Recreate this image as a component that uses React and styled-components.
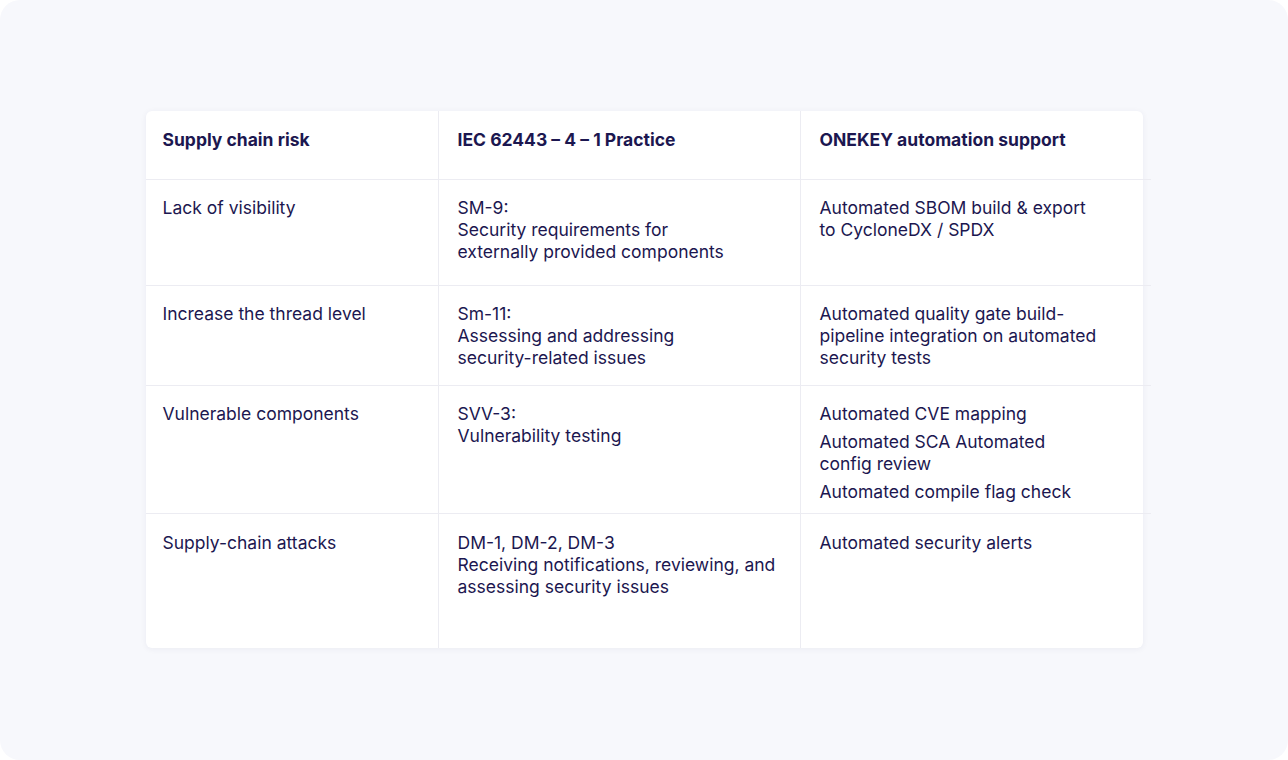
import styled, { createGlobalStyle } from 'styled-components';

const GlobalStyle = createGlobalStyle`
  html, body {
    margin: 0;
    padding: 0;
    background: #ffffff;
  }
  * {
    box-sizing: border-box;
  }
`

const Frame = styled.main`
  width: 1288px;
  height: 760px;
  border-radius: 20px;
  background: #f7f8fc;
  display: flex;
  align-items: flex-start;
  justify-content: center;
  padding-top: 111px;
  font-family: "Inter", "Liberation Sans", sans-serif;
  color: #1c1750;
`

const Card = styled.section`
  width: 997px;
  height: 537px;
  background: #ffffff;
  border-radius: 6px;
  box-shadow: 0 1px 6px rgba(30, 30, 90, 0.06);
  display: grid;
  grid-template-rows: 69px 106px 100px 128px 1fr;
`

const Row = styled.div`
  width: 1005px;
  display: grid;
  grid-template-columns: 293px 362px 1fr;
  border-bottom: ${props => (props.$last ? 'none' : '1px solid #ececf2')};
`

const Cell = styled.div`
  padding: ${props => props.$top || '17px'} 10px 0 ${props => (props.$first ? '17px' : '19px')};
  border-right: ${props => (props.$edge ? 'none' : '1px solid #ececf2')};
  font-size: 17.5px;
  line-height: 22px;
  font-weight: ${props => (props.$head ? 700 : 400)};
  white-space: nowrap;
  display: flex;
  flex-direction: column;
  gap: 6px;
`

const Item = styled.div``

const rows = [
  {
    risk: 'Lack of visibility',
    practice: ['SM-9:', 'Security requirements for', 'externally provided components'],
    support: [['Automated SBOM build & export', 'to CycloneDX / SPDX']],
  },
  {
    risk: 'Increase the thread level',
    practice: ['Sm-11:', 'Assessing and addressing', 'security-related issues'],
    support: [['Automated quality gate build-', 'pipeline integration on automated', 'security tests']],
  },
  {
    risk: 'Vulnerable components',
    practice: ['SVV-3:', 'Vulnerability testing'],
    support: [
      ['Automated CVE mapping'],
      ['Automated SCA Automated', 'config review'],
      ['Automated compile flag check'],
    ],
  },
  {
    risk: 'Supply-chain attacks',
    practice: ['DM-1, DM-2, DM-3', 'Receiving notifications, reviewing, and', 'assessing security issues'],
    support: [['Automated security alerts']],
  },
];

function Lines({ lines }) {
  return lines.map((line, i) => (
    <span key={i}>
      {line}
      {i < lines.length - 1 && <br />}
    </span>
  ));
}

export default function App() {
  return (
    <>
      <GlobalStyle />
      <Frame>
        <Card>
          <Row>
            <Cell $head $first $top="18px">Supply chain risk</Cell>
            <Cell $head $top="18px">IEC 62443 – 4 – 1 Practice</Cell>
            <Cell $head $edge $top="18px">ONEKEY automation support</Cell>
          </Row>
          {rows.map((row, idx) => {
            const last = idx === rows.length - 1;
            const top = last ? '18px' : '17px';
            return (
              <Row key={row.risk} $last={last}>
                <Cell $first $top={top}>{row.risk}</Cell>
                <Cell $top={top}>
                  <Item>
                    <Lines lines={row.practice} />
                  </Item>
                </Cell>
                <Cell $edge $top={top}>
                  {row.support.map((s, i) => (
                    <Item key={i}>
                      <Lines lines={s} />
                    </Item>
                  ))}
                </Cell>
              </Row>
            );
          })}
        </Card>
      </Frame>
    </>
  );
}
